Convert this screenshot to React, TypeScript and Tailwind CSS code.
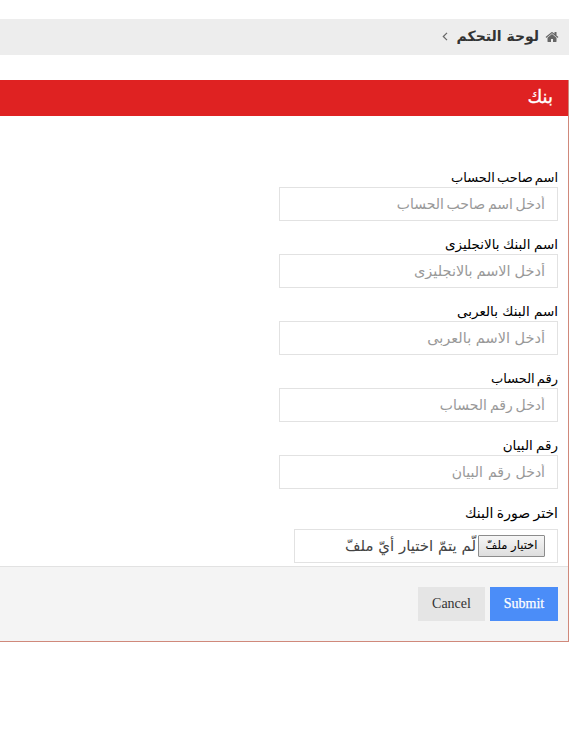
const fields = [
  { label: "اسم صاحب الحساب", hint: "أدخل اسم صاحب الحساب", labelFit: "text-[13px] [word-spacing:-2px]", hintFit: "text-[14px] [word-spacing:-1.7px]" },
  { label: "اسم البنك بالانجليزى", hint: "أدخل الاسم بالانجليزى", labelFit: "text-[13.5px] [word-spacing:-0.8px]", hintFit: "text-[14.5px] [word-spacing:-0.7px]" },
  { label: "اسم البنك بالعربى", hint: "أدخل الاسم بالعربى", labelFit: "text-[13.5px]", hintFit: "text-[14.5px]" },
  { label: "رقم الحساب", hint: "أدخل رقم الحساب", labelFit: "text-[13px] [word-spacing:-2px]", hintFit: "text-[14px] [word-spacing:-1.5px]" },
  { label: "رقم البيان", hint: "أدخل رقم البيان", labelFit: "text-[13.5px] [word-spacing:-1px]", hintFit: "text-[14px] [word-spacing:0.5px]" },
];

function HomeIcon() {
  return (
    <svg viewBox="0 0 1792 1792" className="mb-px size-[14px] shrink-0" fill="#666">
      <path d="M1472 992v480q0 26-19 45t-45 19h-384v-384h-256v384h-384q-26 0-45-19t-19-45v-480q0-1 .5-3t.5-3l575-474 575 474q1 2 1 6zm223-69l-62 74q-8 9-21 11h-3q-13 0-21-7l-692-577-692 577q-12 8-24 7-13-2-21-11l-62-74q-8-10-7-23.5t11-21.5l719-599q32-26 76-26t76 26l244 204v-195q0-14 9-23t23-9h192q14 0 23 9t9 23v408l219 182q10 8 11 21.5t-7 23.5z" />
    </svg>
  );
}

export default function App() {
  return (
    <div dir="rtl" className="h-[732px] w-[577px] overflow-hidden bg-white pt-[19px] pr-2 font-['DejaVu_Sans',sans-serif] text-sm">
      <nav className="flex h-9 items-center bg-[#ededed] pr-[10px] text-[#333]">
        <HomeIcon />
        <span className="mr-[6px] pb-[2px] text-[14px] font-bold whitespace-nowrap">لوحة التحكم</span>
        <svg viewBox="0 0 6 9" className="mr-[9px] mb-px h-[9px] w-[6px]" fill="none" stroke="#666" strokeWidth="1.2">
          <path d="M5 .8 1.3 4.5 5 8.2" />
        </svg>
      </nav>
      <section className="mt-[25px] h-[562px] border-r border-b border-[#d0897b]">
        <h1 className="flex h-9 items-center bg-[#df2222] pr-[15px] pb-[2px] text-[18px] text-white [-webkit-text-stroke:0.3px_white]">بنك</h1>
        <form className="pt-[51px]" onSubmit={(e) => e.preventDefault()}>
          <div className="flex h-[399px] flex-col pr-[10px]">
            {fields.map((f) => (
              <div key={f.label} className="h-[67px] shrink-0">
                <label className={`flex h-5 items-center pt-[2px] whitespace-nowrap text-black ${f.labelFit}`}>{f.label}</label>
                <input placeholder={f.hint} className={`block h-[34px] w-[279px] border border-[#e2e2e2] bg-white px-3 outline-none placeholder:text-[#999] ${f.hintFit}`} />
              </div>
            ))}
            <label className="flex h-[27px] shrink-0 items-center pb-[6px] text-[14px] text-black [word-spacing:-1px]">اختر صورة البنك</label>
            <div className="flex h-[34px] w-[264px] shrink-0 items-center border border-[#e2e2e2] pr-3 text-[#444]">
              <button type="button" className="h-[22px] w-[67px] shrink-0 rounded-[1px] border border-[#8c8c8c] bg-linear-to-b from-[#f6f6f6] to-[#dedede] text-[11.5px] leading-none whitespace-nowrap text-black">اختيار ملفّ</button>
              <span className="mr-[2px] pt-[2px] text-[15px] whitespace-nowrap">لّم يتمّ اختيار أيّ ملفّ</span>
            </div>
          </div>
          <footer className="flex h-[75px] gap-[5px] border-t border-[#e2e2e2] bg-[#f4f4f4] pt-5 pr-[10px] font-['Liberation_Serif',serif] text-[14px]">
            <button className="h-[34px] w-[68px] bg-[#4b8df8] text-white [-webkit-text-stroke:0.25px_white]">Submit</button>
            <button type="button" className="h-[34px] w-[67px] bg-[#e5e5e5] text-[#333]">Cancel</button>
          </footer>
        </form>
      </section>
    </div>
  );
}
